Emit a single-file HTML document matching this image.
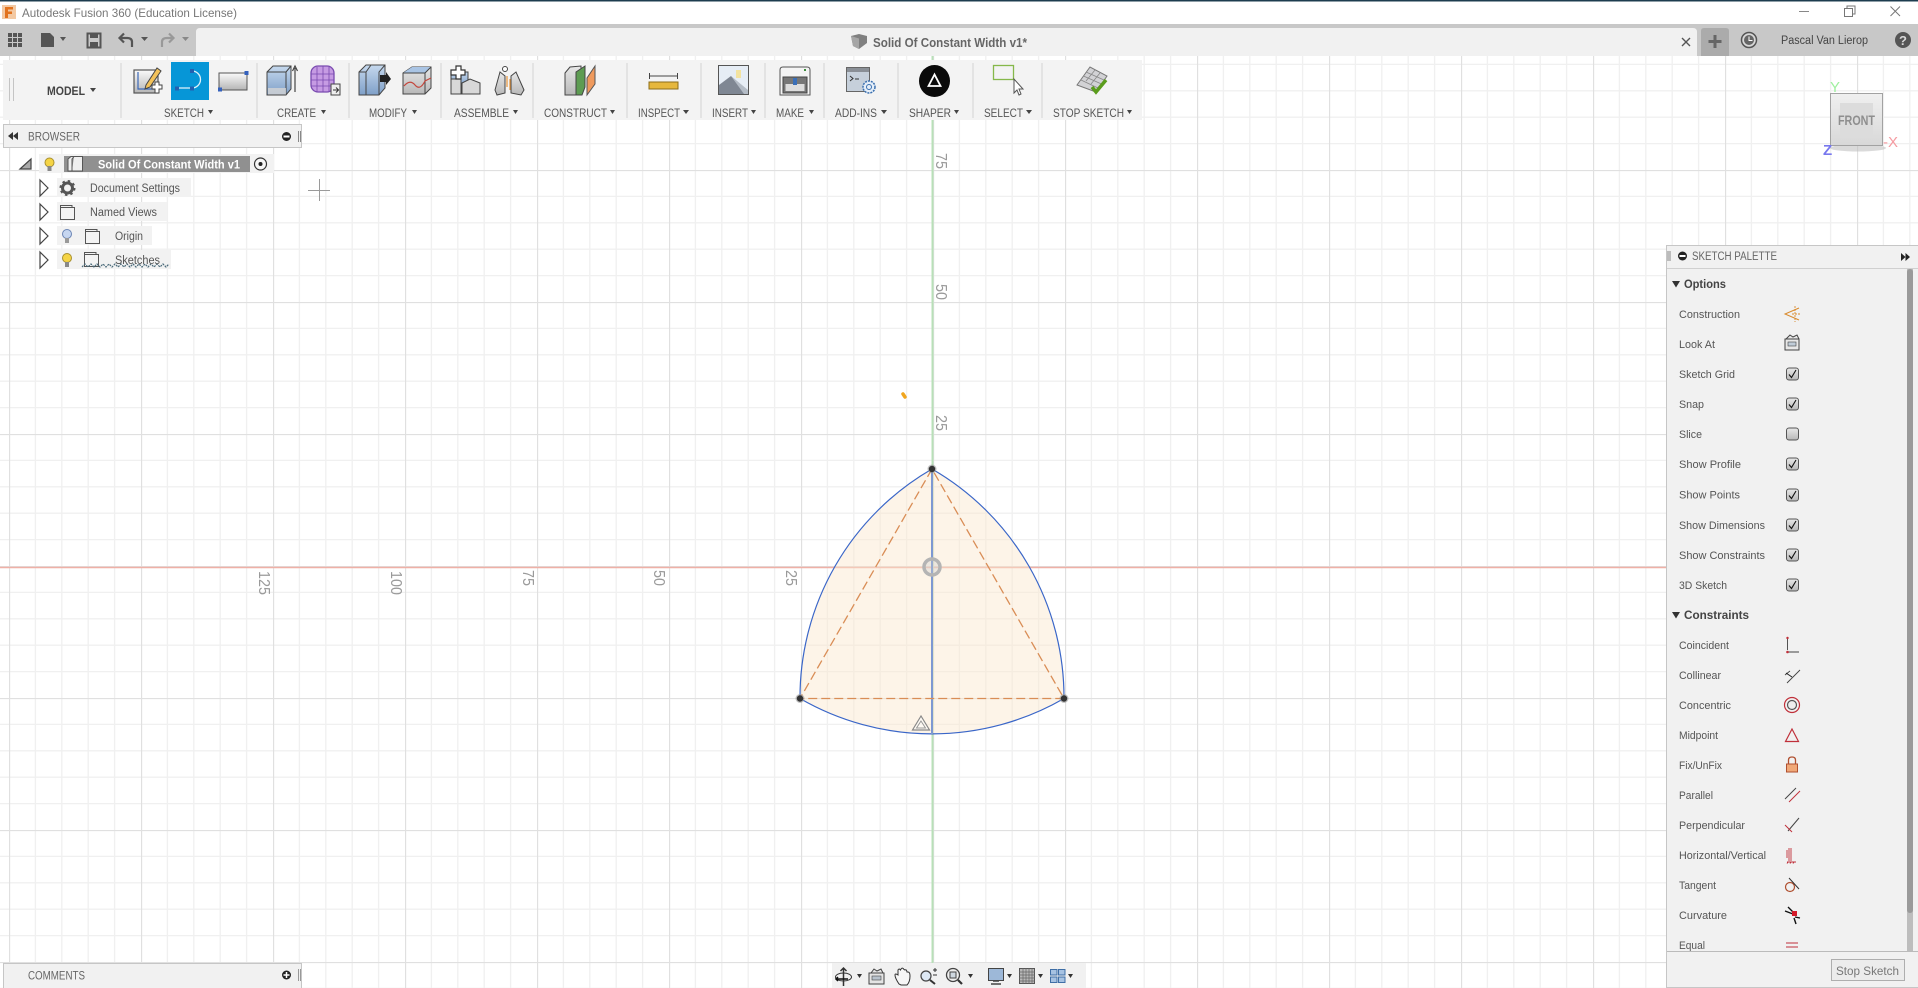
<!DOCTYPE html>
<html><head><meta charset="utf-8"><title>Autodesk Fusion 360</title>
<style>html,body{margin:0;padding:0;background:#fff;overflow:hidden}svg{display:block;font-family:"Liberation Sans",sans-serif}</style></head>
<body>
<svg xmlns="http://www.w3.org/2000/svg" width="1918" height="988" viewBox="0 0 1918 988">
<defs>
<pattern id="grid" x="9" y="38" width="132" height="132" patternUnits="userSpaceOnUse">
<path d="M26.4 0V132M52.8 0V132M79.2 0V132M105.6 0V132M0 26.4H132M0 52.8H132M0 79.2H132M0 105.6H132" stroke="#f0f0f0" stroke-width="1.3" fill="none"/>
<path d="M.5 0V132M0 .5H132" stroke="#e0e0e0" stroke-width="1.3" fill="none"/>
</pattern>
<linearGradient id="gb" x1="0" y1="0" x2="0" y2="1"><stop offset="0" stop-color="#c6d9ee"/><stop offset="1" stop-color="#7e9fc8"/></linearGradient>
<linearGradient id="gg" x1="0" y1="0" x2="0" y2="1"><stop offset="0" stop-color="#fafafa"/><stop offset="1" stop-color="#b5b5b5"/></linearGradient>
<linearGradient id="gc" x1="0" y1="0" x2="0" y2="1"><stop offset="0" stop-color="#e8e8e8"/><stop offset="1" stop-color="#b8b8b8"/></linearGradient>
<linearGradient id="gz" x1="0" y1="0" x2="0" y2="1"><stop offset="0" stop-color="#f0f0f0"/><stop offset="1" stop-color="#d8d8d8"/></linearGradient>
<g id="cb"><rect x="-6" y="-6" width="12" height="12" rx="2.5" fill="url(#gc)" stroke="#555" stroke-width="1"/><path d="M-3.5 .5L-1 3.5L3.5-4" fill="none" stroke="#111" stroke-width="1.1"/></g>
<g id="folder"><path d="M.5 2.5H12V.5H.5ZM.5 2.5V14.5H14.5V2.5H12" fill="#f4f4f4" stroke="#555" stroke-width="1"/></g>
<g id="tri"><path d="M0-8L8 0L0 8Z" fill="#fff" stroke="#444" stroke-width="1.2"/></g>
</defs>

<!-- canvas -->
<rect width="1918" height="988" fill="#fff"/>
<rect y="56" width="1918" height="932" fill="url(#grid)"/>
<path d="M0 567.500H1667" stroke="#efb0a6" stroke-width="1.600"/>
<path d="M932.500 56V988" stroke="#b8e0b8" stroke-width="2"/>
<g fill="#9a9a9a" font-size="16">
<text transform="translate(936 153) rotate(90)" textLength="16" lengthAdjust="spacingAndGlyphs">75</text>
<text transform="translate(936 284) rotate(90)" textLength="16" lengthAdjust="spacingAndGlyphs">50</text>
<text transform="translate(936 415) rotate(90)" textLength="16" lengthAdjust="spacingAndGlyphs">25</text>
<text transform="translate(786 570) rotate(90)" textLength="16" lengthAdjust="spacingAndGlyphs">25</text>
<text transform="translate(654 570) rotate(90)" textLength="16" lengthAdjust="spacingAndGlyphs">50</text>
<text transform="translate(523 570) rotate(90)" textLength="16" lengthAdjust="spacingAndGlyphs">75</text>
<text transform="translate(391 571) rotate(90)" textLength="24" lengthAdjust="spacingAndGlyphs">100</text>
<text transform="translate(259 571) rotate(90)" textLength="24" lengthAdjust="spacingAndGlyphs">125</text>
</g>
<!-- sketch -->
<path d="M932 469A264 264 0 0 1 1064 698.500A264 264 0 0 1 800 698.500A264 264 0 0 1 932 469Z" fill="#fbe6cc" fill-opacity=".45" stroke="#3a66c8" stroke-width="1.200"/>
<path d="M932 469V734" stroke="#7d98d2" stroke-width="2"/>
<path d="M932 469L800 698.500H1064Z" fill="none" stroke="#d98d56" stroke-width="1.300" stroke-dasharray="9 4"/>
<circle cx="932" cy="567" r="8" fill="#ccc" fill-opacity=".35" stroke="#b4b4b4" stroke-width="3.500"/>
<circle cx="932" cy="469" r="4.500" fill="#999" fill-opacity=".6"/><circle cx="932" cy="469" r="3.200" fill="#333"/>
<circle cx="800" cy="698.500" r="4.500" fill="#999" fill-opacity=".6"/><circle cx="800" cy="698.500" r="3.200" fill="#333"/>
<circle cx="1064" cy="698.500" r="4.500" fill="#999" fill-opacity=".6"/><circle cx="1064" cy="698.500" r="3.200" fill="#333"/>
<path d="M921 716L912.500 730H929.500Z" fill="#fff" fill-opacity=".5" stroke="#888" stroke-width="1.200"/><path d="M921 721L916.500 728H925.500Z" fill="none" stroke="#999" stroke-width="1"/>
<path d="M903 394L905 397" stroke="#f0a51e" stroke-width="3.500" stroke-linecap="round"/>
<path d="M308 190.500H330M319.500 179V201" stroke="#9a9a9a" stroke-width="1"/>

<!-- gizmo -->
<ellipse cx="1858" cy="148" rx="28" ry="3.500" fill="#bbb" opacity=".55"/>
<rect x="1830.500" y="93.500" width="52" height="52" fill="url(#gz)" stroke="#a2a2a2"/>
<rect x="1840" y="103" width="33" height="33" fill="#dcdcdc"/>
<text x="1838" y="125" font-size="14" font-weight="bold" fill="#8e8e8e" textLength="37" lengthAdjust="spacingAndGlyphs">FRONT</text>
<text x="1830" y="92" font-size="15" fill="#9ff09f">Y</text>
<text x="1823" y="155" font-size="15" font-weight="bold" fill="#7878ee">Z</text>
<text x="1883" y="147" font-size="15" fill="#f59aa0">-X</text>

<!-- title bar -->
<rect width="1918" height="24" fill="#fff"/>
<rect width="1918" height="1.500" fill="#1d3c4f"/>
<rect x="2" y="5" width="14" height="14" fill="#f3c9a3"/>
<path d="M5 7H13V9.500H8V11.500H12V14H8V18H5Z" fill="#e2731f"/>
<text x="22" y="17" font-size="12" fill="#777" textLength="215" lengthAdjust="spacingAndGlyphs">Autodesk Fusion 360 (Education License)</text>
<path d="M1799 11.500H1809" stroke="#888"/>
<path d="M1844.500 8.500H1852.500V16.500H1844.500ZM1847 8.500V6H1855V14H1852.500" fill="none" stroke="#777"/>
<path d="M1890.500 6.500L1900 16M1900 6.500L1890.500 16" stroke="#777" fill="none"/>

<!-- app bar -->
<rect y="24" width="1918" height="32" fill="#c8c8c8"/>
<path d="M196 56V32Q196 28 200 28H1693Q1697 28 1697 32V56Z" fill="#f1f1f1"/>
<g fill="#555"><rect x="8" y="33" width="4" height="4"/><rect x="13" y="33" width="4" height="4"/><rect x="18" y="33" width="4" height="4"/><rect x="8" y="38" width="4" height="4"/><rect x="13" y="38" width="4" height="4"/><rect x="18" y="38" width="4" height="4"/><rect x="8" y="43" width="4" height="4"/><rect x="13" y="43" width="4" height="4"/><rect x="18" y="43" width="4" height="4"/>
<path d="M41 33H50L54 37V47H41Z"/><path d="M60 37H66L63 41Z"/>
<path d="M141 37H148L144.500 41Z"/></g>
<path d="M87.500 33.500H100.500V47.500H87.500Z" fill="none" stroke="#555" stroke-width="2"/><rect x="90" y="34" width="8" height="4" fill="#555"/><rect x="90" y="42" width="8" height="5" fill="#555"/>
<path d="M132 47V42Q132 38 127 38H120M124 33.500L119.500 38L124 42.500" fill="none" stroke="#555" stroke-width="2.200"/>
<path d="M162 47V42Q162 38 167 38H173M169 33.500L173.500 38L169 42.500" fill="none" stroke="#999" stroke-width="2.200"/>
<path d="M182 37H189L185.500 41Z" fill="#888"/>
<path d="M851 36L859 34L867 36V43L859 49L853 46Z" fill="#808080"/><path d="M851 36L859 38.500V49L853 46Z" fill="#a6a6a6"/>
<text x="873" y="47" font-size="12.500" font-weight="bold" fill="#666" textLength="154" lengthAdjust="spacingAndGlyphs">Solid Of Constant Width v1*</text>
<path d="M1682 38L1690 46M1690 38L1682 46" stroke="#555" stroke-width="1.400"/>
<path d="M1701 56V31Q1701 28 1704 28H1726Q1729 28 1729 31V56Z" fill="#ababab"/>
<path d="M1715 35V48M1708.500 41.500H1721.500" stroke="#666" stroke-width="3"/>
<circle cx="1749" cy="40" r="7.500" fill="#d8d8d8" stroke="#555" stroke-width="1.500"/><circle cx="1749" cy="40" r="5" fill="#666"/><path d="M1749 36.500V40.500H1752.500" stroke="#fff" fill="none"/>
<text x="1781" y="44" font-size="11.500" fill="#444" textLength="87" lengthAdjust="spacingAndGlyphs">Pascal Van Lierop</text>
<circle cx="1903" cy="40" r="8" fill="#555"/><text x="1899" y="45" font-size="13" font-weight="bold" fill="#d8d8d8">?</text>

<!-- toolbar -->
<rect x="3" y="60" width="1139" height="60" fill="#f3f3f3"/>
<path d="M9.500 78V101M13.500 78V101" stroke="#c4c4c4" stroke-width="1"/>
<path d="M121 63V118M257 63V118M349 63V118M441 63V118M533 63V118M627 63V118M701 63V118M765 63V118M824 63V118M898 63V118M973 63V118M1042 63V118" stroke="#dedede" stroke-width="1.500"/>
<text x="47" y="95" font-size="11.500" font-weight="bold" fill="#444" textLength="38" lengthAdjust="spacingAndGlyphs">MODEL</text>
<path d="M90 88H96L93 92Z" fill="#444"/>
<g font-size="12" fill="#555">
<text x="164" y="117" textLength="40" lengthAdjust="spacingAndGlyphs">SKETCH</text>
<text x="277" y="117" textLength="39" lengthAdjust="spacingAndGlyphs">CREATE</text>
<text x="369" y="117" textLength="38" lengthAdjust="spacingAndGlyphs">MODIFY</text>
<text x="454" y="117" textLength="55" lengthAdjust="spacingAndGlyphs">ASSEMBLE</text>
<text x="544" y="117" textLength="63" lengthAdjust="spacingAndGlyphs">CONSTRUCT</text>
<text x="638" y="117" textLength="42" lengthAdjust="spacingAndGlyphs">INSPECT</text>
<text x="712" y="117" textLength="36" lengthAdjust="spacingAndGlyphs">INSERT</text>
<text x="776" y="117" textLength="28" lengthAdjust="spacingAndGlyphs">MAKE</text>
<text x="835" y="117" textLength="42" lengthAdjust="spacingAndGlyphs">ADD-INS</text>
<text x="909" y="117" textLength="42" lengthAdjust="spacingAndGlyphs">SHAPER</text>
<text x="984" y="117" textLength="39" lengthAdjust="spacingAndGlyphs">SELECT</text>
<text x="1053" y="117" textLength="71" lengthAdjust="spacingAndGlyphs">STOP SKETCH</text>
</g>
<g fill="#444"><path d="M208 110H213L210.500 114Z"/><path d="M321 110H326L323.500 114Z"/><path d="M412 110H417L414.500 114Z"/><path d="M513 110H518L515.500 114Z"/><path d="M610 110H615L612.500 114Z"/><path d="M683 110H689L686 114Z"/><path d="M751 110H756L753.500 114Z"/><path d="M809 110H814L811.500 114Z"/><path d="M881 110H887L884 114Z"/><path d="M954 110H959L956.500 114Z"/><path d="M1026 110H1032L1029 114Z"/><path d="M1127 110H1132L1129.500 114Z"/></g>

<!-- sketch icon -->
<rect x="134" y="70" width="24" height="23" fill="url(#gg)" stroke="#555" stroke-width="1.200"/>
<path d="M138 72V89H155" fill="none" stroke="#3b68b8" stroke-width="1.200"/>
<path d="M146 85L157 68L161 71L150 87L145 89Z" fill="#f3c25a" stroke="#444"/>
<path d="M152 85H155V82H159V85H162V89H159V93H155V89H152Z" fill="#fff" stroke="#444"/>
<rect x="171" y="62" width="38" height="38" fill="#0696d7"/>
<path d="M177 88H192A8.500 8.500 0 0 0 192 71" fill="none" stroke="#dff1fa" stroke-width="1.300"/>
<g fill="#2460b0"><rect x="175" y="86.500" width="4" height="4"/><rect x="190" y="86.500" width="4" height="4"/><rect x="190" y="69" width="4" height="4"/></g>
<rect x="219" y="73" width="28" height="17" fill="url(#gg)" stroke="#555"/>
<rect x="244.500" y="71" width="4" height="4" fill="#3461bd"/><rect x="218" y="87.500" width="4" height="4" fill="#3461bd"/>

<!-- create -->
<path d="M267 72L273 66H291V89L286 95H267Z" fill="url(#gb)" stroke="#444"/><path d="M267 72H286V95M286 72L291 66" fill="none" stroke="#444"/><rect x="268" y="88" width="18" height="6.500" fill="#d4d4d4" opacity=".8"/>
<path d="M295 92V68M292.500 71L295 66L297.500 71" fill="none" stroke="#444" stroke-width="1.200"/>
<rect x="311" y="66" width="23" height="26" rx="7" fill="#c69be3" stroke="#7a4bb0" stroke-width="1.300"/><path d="M311 74H334M311 80H334M311 86H334M317 67V92M323 66V92M329 67V92" stroke="#7a4bb0" stroke-width=".8"/>
<rect x="331" y="84" width="9" height="11" fill="#eee" stroke="#444"/><path d="M333 90H338M336 87.500L338.500 90L336 92.500" fill="none" stroke="#333"/>

<!-- modify -->
<path d="M359 72L366 65H385V88L379 95H359Z" fill="url(#gb)" stroke="#444"/><path d="M366 95V72L371 65M366 72H359M379 95V72L385 65" fill="none" stroke="#444"/><path d="M380 75H386V72L391 79L386 85V82H380Z" fill="#222"/>
<path d="M403 73L412 67H431V88L425 94H403Z" fill="url(#gc)" stroke="#444"/><path d="M403 73H425L431 67H412Z" fill="#a9c4e4"/><path d="M403 73H425V94M425 73L431 67" fill="none" stroke="#444"/><path d="M404 86Q410 79 415 85T425 81L431 78" fill="none" stroke="#c4473d" stroke-width="1.200"/>

<!-- assemble -->
<rect x="451" y="72" width="17" height="14" fill="url(#gb)" stroke="#444"/><path d="M451 79H461V94H451ZM462 83L470 79L480 83V94H462Z" fill="#d8d8d8" stroke="#444"/>
<path d="M456 66H461V70H465V75H461V79H456V75H451V70H456Z" fill="#fff" stroke="#333" stroke-width="1.200"/>
<path d="M495 90L500 72L505 76V93L497 95ZM524 90L516 72L511 76V93L521 95Z" fill="url(#gc)" stroke="#444"/><path d="M507 76V87M510 79V90" stroke="#e6953a" stroke-width="1.200"/><circle cx="505" cy="69" r="2.500" fill="#fff" stroke="#444"/>

<!-- construct -->
<path d="M565 73L570 67L581 66V87L576 95H565Z" fill="url(#gc)" stroke="#444"/><path d="M576 72V95H582L585 87V66L576 72Z" fill="#5d9c52" stroke="#444"/>
<path d="M587 78L595 66V84L587 95Z" fill="#ef9a5d" stroke="#555"/>

<!-- inspect -->
<path d="M649.500 73V79M677.500 73V79M650 76H677" stroke="#444"/>
<rect x="649" y="82" width="29" height="7" fill="#e6b73c" stroke="#8c6d1a"/>
<!-- insert -->
<rect x="718.500" y="65.500" width="30" height="29" fill="#e6edf5" stroke="#555"/><rect x="736" y="70" width="5" height="8" fill="#f3e3a0"/><path d="M719 94V85L731 76L747 94Z" fill="#7f8793"/><path d="M731 76L748 90V94H744Z" fill="#b4bcc6"/>
<!-- make -->
<path d="M780 70Q780 67 783 67H807Q810 67 810 70V95H780Z" fill="#f4f4f4" stroke="#555"/><rect x="783" y="77" width="24" height="16" fill="#777" stroke="#444"/><rect x="785.500" y="84" width="19" height="7" fill="#ddd"/><rect x="793" y="78" width="4" height="7" fill="#3a6fb8"/><rect x="804" y="69" width="2" height="2" fill="#3a8a3a"/>
<!-- add-ins -->
<rect x="846.500" y="67.500" width="23" height="24" fill="#c6d0db" stroke="#666"/><rect x="847" y="68" width="22" height="4" fill="#8a8f96"/><path d="M850 76L853 78.500L850 81M855 79H859" stroke="#333" fill="none"/>
<circle cx="869" cy="87" r="6" fill="#e5eef8" stroke="#3a70b0" stroke-width="1.500" stroke-dasharray="2 1"/><circle cx="869" cy="87" r="2.500" fill="none" stroke="#3a70b0"/>
<!-- shaper -->
<ellipse cx="934.500" cy="81" rx="15.500" ry="16" fill="#0a0a0a"/><path d="M934.500 74.500L928.500 86H940.500Z" fill="none" stroke="#fff" stroke-width="1.800"/>
<!-- select -->
<rect x="993.500" y="65.500" width="20" height="14" fill="none" stroke="#86b84a" stroke-width="1.300"/>
<path d="M1014 79L1014 93L1017 90L1019 95L1021 94L1019 89L1023 89Z" fill="#fff" stroke="#555"/>
<!-- stop sketch -->
<path d="M1077 85L1090 67L1107 76L1096 92Z" fill="#d2d2d5" stroke="#777"/><path d="M1083.500 76L1101.500 84M1086 72L1104 80M1081 80L1098 88M1086 81L1095 70M1091 84L1100 73" stroke="#888" stroke-width=".8"/>
<path d="M1092 87L1096 92L1106 80" fill="none" stroke="#5a9c1c" stroke-width="3.500"/>

<!-- browser -->
<rect x="3.500" y="124.500" width="298" height="23" fill="#f1f1f1" stroke="#c6c6c6"/>
<path d="M13 132V140L8 136ZM18 132V140L13 136Z" fill="#333"/>
<text x="28" y="140.500" font-size="12" fill="#666" textLength="52" lengthAdjust="spacingAndGlyphs">BROWSER</text>
<circle cx="286.500" cy="136.500" r="4.500" fill="#222"/><rect x="283.500" y="135.500" width="6" height="2" fill="#fff"/>
<path d="M298.500 131V142M300.500 131V142" stroke="#888"/>

<path d="M20 169L31 159V169Z" fill="#aaa" stroke="#444" stroke-width="1.200"/>
<rect x="39" y="154" width="235" height="19" fill="#f2f2f2"/>
<circle cx="49.500" cy="162.500" r="4.500" fill="#f5d445" stroke="#a89030"/><rect x="47.500" y="166" width="4" height="5" fill="#888"/>
<rect x="64" y="156" width="186" height="16" fill="#909090"/>
<path d="M68 159L71 156.500H82.500V171H68ZM74 156.500L72 159V171" fill="#eee" stroke="#555"/>
<text x="98" y="168.500" font-size="12" font-weight="bold" fill="#fff" textLength="142" lengthAdjust="spacingAndGlyphs">Solid Of Constant Width v1</text>
<circle cx="260.500" cy="164" r="6" fill="#f6f6f6" stroke="#333" stroke-width="1.200"/><circle cx="260.500" cy="164" r="2" fill="#222"/>

<rect x="57" y="178" width="134" height="19" fill="#f2f2f2"/>
<rect x="57" y="202" width="110" height="19" fill="#f2f2f2"/>
<rect x="57" y="226" width="95" height="19" fill="#f2f2f2"/>
<rect x="57" y="250" width="114" height="19" fill="#f2f2f2"/>
<use href="#tri" x="40" y="188"/><use href="#tri" x="40" y="212"/><use href="#tri" x="40" y="236"/><use href="#tri" x="40" y="260"/>
<circle cx="67.500" cy="188" r="5" fill="none" stroke="#555" stroke-width="3"/><circle cx="67.500" cy="188" r="7" fill="none" stroke="#555" stroke-width="2" stroke-dasharray="2.500 3"/>
<use href="#folder" x="60" y="205"/><use href="#folder" x="85" y="229"/><use href="#folder" x="84" y="252"/>
<circle cx="67" cy="234" r="4.500" fill="#c6d6f0" stroke="#6b85b5"/><rect x="65" y="238" width="4" height="5" fill="#999"/>
<circle cx="67" cy="258" r="4.500" fill="#f5d445" stroke="#a89030"/><rect x="65" y="262" width="4" height="5" fill="#888"/>
<path d="M82 267L85 264L88 267L91 264L94 267L97 264L100 267L103 264L106 267L109 264L112 267L115 264L118 267L121 264L124 267L127 264L130 267L133 264L136 267L139 264L142 267L145 264L148 267L151 264L154 267L157 264L160 267L163 264L166 267L169 264" fill="none" stroke="#4a6a7a" stroke-width="1.200" stroke-dasharray="2 1"/>
<g font-size="11.500" fill="#555">
<text x="90" y="192" textLength="90" lengthAdjust="spacingAndGlyphs">Document Settings</text>
<text x="90" y="216" textLength="67" lengthAdjust="spacingAndGlyphs">Named Views</text>
<text x="115" y="240" textLength="28" lengthAdjust="spacingAndGlyphs">Origin</text>
<text x="115" y="264" textLength="45" lengthAdjust="spacingAndGlyphs">Sketches</text>
</g>

<!-- comments -->
<rect x="3.500" y="963.500" width="298" height="25" fill="#f1f1f1" stroke="#c6c6c6"/>
<text x="28" y="979.500" font-size="11.500" fill="#666" textLength="57" lengthAdjust="spacingAndGlyphs">COMMENTS</text>
<circle cx="286.500" cy="975" r="4.500" fill="#222"/><path d="M283.500 975H289.500M286.500 972V978" stroke="#fff" stroke-width="1.500"/>
<path d="M298.500 969V981M300.500 969V981" stroke="#999"/>

<!-- navbar -->
<rect x="832" y="963" width="254" height="25" fill="#f1f1f1"/>
<ellipse cx="843.500" cy="977" rx="8" ry="4" fill="none" stroke="#333"/><path d="M843.500 968V986M840.500 971L843.500 968L846.500 971" fill="none" stroke="#333" stroke-width="1.500"/><path d="M836 979H848M838 977L836 979L838 981" fill="none" stroke="#111" stroke-width="1.500"/>
<path d="M857 974H862L859.500 978Z" fill="#333"/>
<path d="M869 973H884V984H869ZM871 973L874 969L877 971L881 969L883 973" fill="#e4e4e4" stroke="#444"/><rect x="872" y="976" width="9" height="4" fill="#b8c2cc" stroke="#444" stroke-width=".6"/>
<path d="M899 984Q895 978 895 975Q895 973 898 975L898 970Q899 968 900.500 970L901 969Q902.500 967 904 969.500L905 970Q906.500 969 907 972L908 972Q910 972 910 976Q910 982 907 985H901Z" fill="#f6f6f6" stroke="#333"/>
<circle cx="926" cy="976" r="5" fill="#dde8f4" stroke="#444" stroke-width="1.200"/><path d="M930 980L935 984" stroke="#333" stroke-width="2"/><path d="M933 970H937M935 968V972M933 975H937" stroke="#333"/>
<circle cx="953" cy="975" r="6.500" fill="#eee" stroke="#444" stroke-width="1.300"/><rect x="950" y="972" width="6" height="6" fill="#cfd8e0" stroke="#444"/><path d="M958 980L962 984" stroke="#333" stroke-width="2.200"/>
<path d="M968 974H973L970.500 978Z" fill="#333"/>
<rect x="988.500" y="968.500" width="15" height="12" fill="#9db8d8" stroke="#444"/><path d="M993 981H999M991 984H1001" stroke="#444" stroke-width="1.500"/>
<path d="M1007 974H1012L1009.500 978Z" fill="#333"/>
<rect x="1019.500" y="968.500" width="15" height="15" fill="#b8b8b8" stroke="#555"/><path d="M1019 972H1035M1019 975H1035M1019 978H1035M1019 981H1035M1023 968V984M1026 968V984M1029 968V984M1032 968V984" stroke="#666" stroke-width=".7"/>
<path d="M1038 974H1043L1040.500 978Z" fill="#333"/>
<path d="M1050.500 969.500H1057V975H1050.500ZM1058.500 969.500H1065V975H1058.500ZM1050.500 977H1057V982.500H1050.500ZM1058.500 977H1065V982.500H1058.500Z" fill="#a6c2e2" stroke="#3e6ea6"/>
<path d="M1068 974H1073L1070.500 978Z" fill="#333"/>

<!-- sketch palette -->
<rect x="1666.500" y="245.500" width="252" height="743" fill="#f1f1f1" stroke="#c6c6c6"/>
<path d="M1667 268.500H1918" stroke="#d0d0d0"/>
<path d="M1668 251V261M1670 251V261" stroke="#888"/>
<circle cx="1682.500" cy="256" r="4.500" fill="#222"/><rect x="1679.500" y="255" width="6" height="2" fill="#fff"/>
<text x="1692" y="260" font-size="11.500" fill="#666" textLength="85" lengthAdjust="spacingAndGlyphs">SKETCH PALETTE</text>
<path d="M1901 253V261L1905.500 257ZM1905.500 253V261L1910 257Z" fill="#222"/>
<rect x="1907" y="269" width="6" height="682" fill="#bdbdbd"/>
<rect x="1907" y="269" width="6" height="644" rx="3" fill="#9a9a9a"/>
<path d="M1672 281H1680L1676 287.500Z" fill="#333"/>
<text x="1684" y="288" font-size="11.500" font-weight="bold" fill="#444" textLength="42" lengthAdjust="spacingAndGlyphs">Options</text>
<g font-size="11.300" fill="#555">
<text x="1679" y="318" textLength="61" lengthAdjust="spacingAndGlyphs">Construction</text>
<text x="1679" y="348" textLength="36" lengthAdjust="spacingAndGlyphs">Look At</text>
<text x="1679" y="378" textLength="56" lengthAdjust="spacingAndGlyphs">Sketch Grid</text>
<text x="1679" y="408" textLength="25" lengthAdjust="spacingAndGlyphs">Snap</text>
<text x="1679" y="438" textLength="23" lengthAdjust="spacingAndGlyphs">Slice</text>
<text x="1679" y="468" textLength="62" lengthAdjust="spacingAndGlyphs">Show Profile</text>
<text x="1679" y="498.500" textLength="61" lengthAdjust="spacingAndGlyphs">Show Points</text>
<text x="1679" y="529" textLength="86" lengthAdjust="spacingAndGlyphs">Show Dimensions</text>
<text x="1679" y="559" textLength="86" lengthAdjust="spacingAndGlyphs">Show Constraints</text>
<text x="1679" y="589" textLength="48" lengthAdjust="spacingAndGlyphs">3D Sketch</text>
<text x="1679" y="649" textLength="50" lengthAdjust="spacingAndGlyphs">Coincident</text>
<text x="1679" y="679" textLength="42" lengthAdjust="spacingAndGlyphs">Collinear</text>
<text x="1679" y="709" textLength="52" lengthAdjust="spacingAndGlyphs">Concentric</text>
<text x="1679" y="739" textLength="39" lengthAdjust="spacingAndGlyphs">Midpoint</text>
<text x="1679" y="769" textLength="43" lengthAdjust="spacingAndGlyphs">Fix/UnFix</text>
<text x="1679" y="799" textLength="34" lengthAdjust="spacingAndGlyphs">Parallel</text>
<text x="1679" y="829" textLength="66" lengthAdjust="spacingAndGlyphs">Perpendicular</text>
<text x="1679" y="859" textLength="87" lengthAdjust="spacingAndGlyphs">Horizontal/Vertical</text>
<text x="1679" y="889" textLength="37" lengthAdjust="spacingAndGlyphs">Tangent</text>
<text x="1679" y="919" textLength="48" lengthAdjust="spacingAndGlyphs">Curvature</text>
<text x="1679" y="949" textLength="26" lengthAdjust="spacingAndGlyphs">Equal</text>
</g>
<path d="M1672 612H1680L1676 618.500Z" fill="#333"/>
<text x="1684" y="619" font-size="11.500" font-weight="bold" fill="#444" textLength="65" lengthAdjust="spacingAndGlyphs">Constraints</text>

<path d="M1799 308L1785 314L1799 320" fill="none" stroke="#d98a2c" stroke-width="1"/><path d="M1795 306V322M1792 314H1800" stroke="#d98a2c" stroke-width=".9" stroke-dasharray="2 1" fill="none"/>
<path d="M1785 339H1799V350H1785ZM1786 339L1790 335L1793 337L1797 335L1799 339" fill="#e8e8e8" stroke="#444"/><rect x="1788" y="342" width="8" height="4" fill="#c0ccd8" stroke="#444" stroke-width=".6"/>
<use href="#cb" x="1792.500" y="374"/><use href="#cb" x="1792.500" y="404"/>
<rect x="1786.500" y="428" width="12" height="12" rx="2.500" fill="url(#gc)" stroke="#555"/>
<use href="#cb" x="1792.500" y="464"/><use href="#cb" x="1792.500" y="495"/><use href="#cb" x="1792.500" y="525"/><use href="#cb" x="1792.500" y="555"/><use href="#cb" x="1792.500" y="585"/>

<!-- constraint icons -->
<path d="M1787.500 638V650M1787 652H1799" stroke="#444" stroke-width=".9"/><circle cx="1787.500" cy="638" r="1.200" fill="#c0303a"/><circle cx="1787.500" cy="652" r="1.300" fill="#c0303a"/>
<path d="M1787 683L1800 670M1785 675L1790 671" stroke="#444" fill="none" stroke-width=".9"/><path d="M1786 673L1792 677" stroke="#222"/>
<circle cx="1792" cy="705" r="7.500" fill="none" stroke="#c0303a" stroke-width="1.200"/><circle cx="1792" cy="705" r="4.500" fill="#eee" stroke="#555" stroke-width="1.200"/>
<path d="M1792 729L1785.500 741.500H1798.500Z" fill="none" stroke="#c0303a" stroke-width="1.200"/>
<path d="M1788.500 764V760Q1788.500 757 1792 757Q1795.500 757 1795.500 760V764" fill="none" stroke="#b05030" stroke-width="1.300"/><rect x="1786.500" y="764" width="11" height="8" fill="#f0a878" stroke="#b05030"/>
<path d="M1785 799L1796 788" stroke="#444"/><path d="M1789 802L1800 791" stroke="#c0303a"/>
<path d="M1799 818L1788 831" stroke="#444"/><path d="M1785 825L1792 832" stroke="#c0303a"/>
<path d="M1789 848V861M1791 848V861M1787 850V858" stroke="#c0303a" stroke-width=".9"/><path d="M1787 862H1796M1787 863.500L1788 862M1790 863.500L1791 862M1793 863.500L1794 862" stroke="#c0303a" fill="none"/>
<circle cx="1790" cy="887" r="4.500" fill="none" stroke="#b05030" stroke-width="1.200"/><path d="M1789 878L1799 889" stroke="#333"/>
<path d="M1785 911L1793 914M1788 907L1794 913M1795 917L1800 918M1794 918L1796 924" stroke="#111" stroke-width="1.400" fill="none"/><rect x="1792" y="911" width="5" height="5" fill="#d41a2a"/>
<path d="M1786 943H1798M1786 947H1798" stroke="#c0303a" stroke-width="1"/>

<rect x="1667" y="951" width="251" height="36" fill="#f1f1f1"/>
<path d="M1667 951.500H1918" stroke="#bbb"/>
<rect x="1831.500" y="959.500" width="73" height="21" fill="#ececec" stroke="#aeaeae"/>
<text x="1836" y="975" font-size="12" fill="#777" textLength="63" lengthAdjust="spacingAndGlyphs">Stop Sketch</text>
<path d="M1666 987.500H1918" stroke="#c6c6c6"/>
</svg>
</body></html>
